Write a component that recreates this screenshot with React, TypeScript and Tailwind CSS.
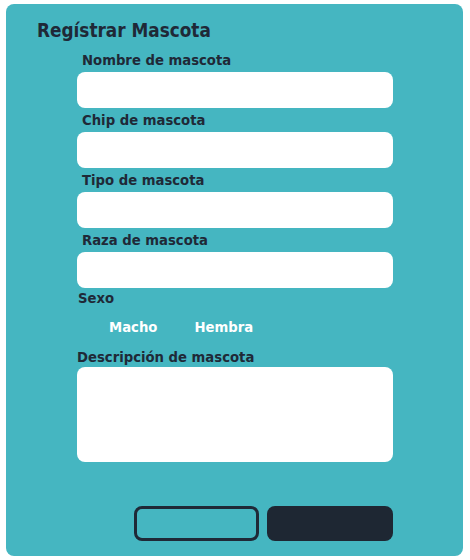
export default function App() {
  const fields = ["Nombre de mascota", "Chip de mascota", "Tipo de mascota", "Raza de mascota"];

  return (
    <div className="w-[470px] h-[560px] bg-white pt-1 pl-[6px] font-['DejaVu_Sans_Condensed','DejaVu_Sans',sans-serif]">
      <div className="w-[457px] h-[552px] bg-[#45b6c1] rounded-lg pt-[15px] text-[#1f2937]">
        {/* Title */}
        <h1 className="pl-[31px] text-[18.8px] leading-[24px] font-bold">Regístrar Mascota</h1>

        <form className="ml-[71px] w-[316px] mt-[5px]">
          {fields.map((f) => (
            <div key={f}>
              <label className="block pl-[5px] text-[14.7px] leading-[24px] font-bold">{f}</label>
              <input type="text" className="block w-full h-9 bg-white rounded-lg outline-none" />
            </div>
          ))}

          {/* Sexo */}
          <div className="pl-px text-[14.7px] leading-[20px] font-bold">Sexo</div>
          <div className="flex items-center h-[39px] pl-[32px] gap-[37px] text-[14.7px] font-bold text-white">
            <label>Macho</label>
            <label>Hembra</label>
          </div>

          <label className="block text-[14.7px] leading-[20px] font-bold">Descripción de mascota</label>
          <textarea className="block w-full h-[95px] bg-white rounded-lg resize-none outline-none" />

          {/* Actions */}
          <div className="flex justify-end gap-2 mt-[44px]">
            <button type="button" className="w-[125px] h-[35px] rounded-lg border-[3px] border-[#1f2937]" />
            <button type="submit" className="w-[126px] h-[35px] rounded-lg bg-[#1e2733]" />
          </div>
        </form>
      </div>
    </div>
  );
}
